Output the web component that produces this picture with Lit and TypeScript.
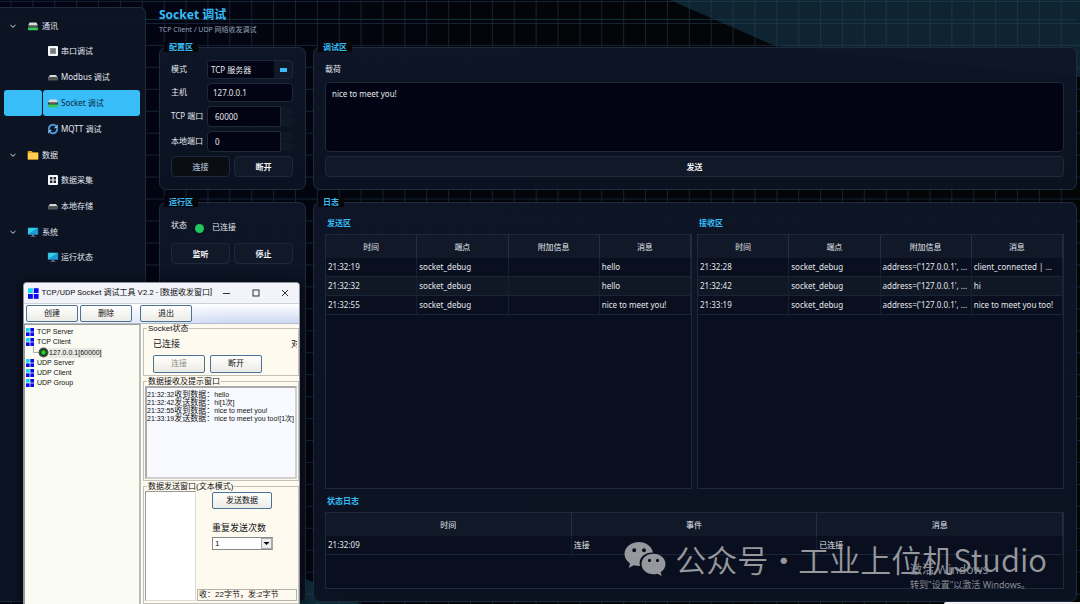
import { LitElement, html, svg, css, nothing } from "lit";
import { customElement, property } from "lit/decorators.js";

const icons: Record<string, unknown> = {
  modemOn: svg`<path d="M2.5 2.5h7l1.5 3.5H1z" fill="#d9dcd8"/><rect x="1" y="5.4" width="10" height="2.4" fill="#2b332f"/><rect x="1" y="7.6" width="10" height="2.6" rx=".6" fill="#35c759"/><rect x="2" y="6" width="8" height=".8" fill="#5d6761"/>`,
  modem: svg`<path d="M3 4h6l2 3H1z" fill="#d6d8d6"/><path d="M1 6.6h10v1.8a1 1 0 0 1-1 1H2a1 1 0 0 1-1-1z" fill="#55585a"/><rect x="2" y="6.4" width="8" height=".8" fill="#2c2f31"/>`,
  chip: svg`<rect x="1" y="1" width="10" height="10" rx="1" fill="#f4f6f8"/><rect x="3" y="3" width="6" height="6" fill="#8f9498"/><rect x="4" y="4" width="4" height="4" fill="#777c80"/>`,
  sync: svg`<path d="M2 6.6A4 4 0 0 1 9 3.2M10 5.4A4 4 0 0 1 3 8.8" fill="none" stroke="#4a9fe0" stroke-width="1.9"/><path d="M10.8 1.2v4H6.8zM1.2 10.8v-4h4z" fill="#7cc0f2"/>`,
  folder: svg`<path d="M.8 2h4l1 1.2h5.4V10.4H.8z" fill="#e9a51f"/><path d="M.8 4h10.4v6.4H.8z" fill="#ffcf4d"/>`,
  grid: svg`<rect x="1" y="1" width="10" height="10" rx="1" fill="#f4f6f8"/><path d="M3 3h2.4v2.4H3zM6.6 3H9v2.4H6.6zM3 6.6h2.4V9H3zM6.6 6.6H9V9H6.6z" fill="#20262c"/>`,
  screen: svg`<rect x=".8" y="1.6" width="10.4" height="7.2" rx=".5" fill="#1273c4"/><path d="M1.2 2h9.6L1.2 8.4z" fill="#35cfe0"/><path d="M1.2 8.4L10.8 2v6.4z" fill="#1d9bd6"/><path d="M5 8.8h2v1.2H5zM3.6 10h4.8v.8H3.6z" fill="#6b7a86"/>`,
};
const icon = (name: string) => html`<svg class="icon" viewBox="0 0 12 12" aria-hidden="true">${icons[name]}</svg>`;

const tiles = html`<svg class="tiles" viewBox="0 0 11 11" aria-hidden="true">
  <rect width="5" height="5" fill="#12dcea"></rect><rect x="6" width="5" height="5" fill="#0a0af0"></rect>
  <rect y="6" width="5" height="5" fill="#0a0af0"></rect><rect x="6" y="6" width="5" height="5" fill="#0a0af0"></rect></svg>`;

interface NavItem { label: string; icon: string; active?: boolean }
const nav: { label: string; icon: string; items: NavItem[] }[] = [
  { label: "通讯", icon: "modemOn", items: [
    { label: "串口调试", icon: "chip" },
    { label: "Modbus 调试", icon: "modem" },
    { label: "Socket 调试", icon: "modemOn", active: true },
    { label: "MQTT 调试", icon: "sync" },
  ] },
  { label: "数据", icon: "folder", items: [
    { label: "数据采集", icon: "grid" },
    { label: "本地存储", icon: "modem" },
  ] },
  { label: "系统", icon: "screen", items: [{ label: "运行状态", icon: "screen" }] },
];

const logColumns = ["时间", "端点", "附加信息", "消息"];
const sent = [
  ["21:32:19", "socket_debug", "", "hello"],
  ["21:32:32", "socket_debug", "", "hello"],
  ["21:32:55", "socket_debug", "", "nice to meet you!"],
];
const received = [
  ["21:32:28", "socket_debug", "address=('127.0.0.1', ...", "client_connected | ..."],
  ["21:32:42", "socket_debug", "address=('127.0.0.1', ...", "hi"],
  ["21:33:19", "socket_debug", "address=('127.0.0.1', ...", "nice to meet you too!"],
];

@customElement("log-table")
export class LogTable extends LitElement {
  @property() label = "";
  @property({ attribute: false }) columns: string[] = [];
  @property({ attribute: false }) rows: string[][] = [];

  static styles = css`
    :host { display: flex; flex-direction: column; gap: 4px; min-width: 0; }
    .label { margin: 0; padding-left: 2px; font-size: 8px; line-height: 15px; color: #38bdf8; }
    .frame { flex: 1; border: 1px solid #1e293b; background: #090f1e; overflow: hidden; }
    table { width: 100%; table-layout: fixed; border-collapse: separate; border-spacing: 0; font-size: 8px; }
    th { height: 23px; padding: 0; font-weight: 400; color: #e2e8f0; background: #111827; border-right: 1px solid #243040; }
    td { height: 18px; padding: 0 2px; line-height: 12px; white-space: nowrap; overflow: hidden; color: #e5e7eb;
      border-right: 1px solid #172030; border-bottom: 1px solid #1a2535; }
    tr:nth-child(even) td { background: #101826; }
  `;

  render() {
    return html`
      <h3 class="label">${this.label}</h3>
      <div class="frame">
        <table aria-label=${this.label}>
          <thead><tr>${this.columns.map((c) => html`<th scope="col">${c}</th>`)}</tr></thead>
          <tbody>${this.rows.map((r) => html`<tr>${r.map((c) => html`<td>${c}</td>`)}</tr>`)}</tbody>
        </table>
      </div>`;
  }
}

@customElement("socket-tool")
export class SocketTool extends LitElement {
  static styles = css`
    * { box-sizing: border-box; }
    :host { display: flex; flex-direction: column; overflow: hidden; color: #111; background: #fffaf0;
      border: 1px solid #8b929c; border-bottom: 0; border-radius: 4px 4px 0 0; box-shadow: 0 2px 10px 4px rgba(0, 0, 0, 0.45);
      font-family: "Liberation Sans", "Noto Sans CJK SC", sans-serif; font-size: 8px; line-height: 10px; }
    .title { display: flex; align-items: center; height: 20px; padding-left: 4px; background: #f2f4fa;
      font-family: Roboto, "Noto Sans CJK SC", sans-serif; white-space: nowrap; flex: none; }
    .title .tiles { width: 11px; height: 11px; margin-right: 3px; }
    .caption { flex: 1; }
    .win { width: 30px; height: 20px; padding: 0; border: 0; background: none; display: grid; place-items: center; }
    .win svg { width: 8px; height: 8px; fill: none; stroke: #333; }
    .bar { display: flex; gap: 2px; height: 21px; padding: 1px 2px; flex: none; border-top: 1px solid #ccd2dd;
      border-bottom: 1px solid #b4bbc8; background: linear-gradient(90deg, #fff, rgba(255, 255, 255, 0) 75%), linear-gradient(#fff, #ccd8f3); }
    .push { width: 52px; height: 18px; padding: 0; border: 1px solid #4a7398; border-radius: 2px; color: #111;
      background: linear-gradient(#fff, #ecebe5); font: inherit; font-size: 8px; }
    .bar .push { height: 17px; }
    .bar .push:last-child { margin-left: 6px; }
    .push:disabled { color: #8f8f8b; }
    .body { flex: 1; display: grid; grid-template-columns: 117px 1fr; min-height: 0; }
    .tree { margin: 0; padding: 2px 0 0 1px; list-style: none; background: #fafbf2; border: 1px solid #9a9a96;
      border-right: 2px solid #bcbcb8; border-bottom: 0; font-size: 7px; }
    .tree ul { margin: 0; padding: 0 0 0 6px; list-style: none; }
    .node { display: flex; align-items: center; gap: 3px; height: 10px; }
    .tree .tiles { width: 8px; height: 8px; }
    .leaf { display: flex; align-items: center; gap: 0; height: 11px; }
    .leaf svg { width: 17px; height: 11px; }
    .leaf span { background: #e9e9e4; }
    .side { display: flex; flex-direction: column; gap: 1px; min-width: 0; padding-left: 2px; }
    fieldset { margin: 0; min-width: 0; padding: 0 1px 2px; border: 1px solid #c4c1b8; }
    legend { margin-left: 2px; padding: 0 1px; line-height: 9px; height: 9px; }
    .state { height: 52px; }
    .line { display: flex; justify-content: space-between; align-items: center; height: 22px; padding-left: 8px; white-space: nowrap;
      font-size: 9px; }
    .cut { width: 6px; overflow: hidden; }
    .pair { display: flex; gap: 5px; padding-left: 8px; }
    .received { height: 104px; }
    .output { height: 93px; margin: 0; padding: 3px 0; background: #f8faff; border: 2px solid #aaa; border-right-color: #d0d0d0;
      border-bottom-color: #d0d0d0; font-size: 7px; line-height: 8px; white-space: nowrap; overflow: hidden; }
    .output p { margin: 0; height: 8px; line-height: 8px; display: flex; align-items: center; }
    .tag { font-size: 8px; }
    .send { flex: 1; }
    .cols { display: grid; grid-template-columns: 51px 1fr; height: 110px; }
    textarea { resize: none; width: 100%; height: 100%; padding: 0; border: 1px solid #999; border-right-color: #ddd;
      border-bottom-color: #ddd; background: #fff; }
    .options { display: flex; flex-direction: column; align-items: flex-start; padding: 1px 0 0 1px; }
    .options .push { width: 60px; margin-left: 15px; height: 17px; flex: none; }
    .options label { margin: 14px 0 4px 15px; font-size: 9px; }
    .choice { position: relative; margin-left: 15px; width: 61px; height: 13px; flex: none; }
    select { appearance: none; width: 100%; height: 100%; padding: 0 2px; border: 1px solid #888; border-right-color: #aaa; border-radius: 0;
      background: #fff; color: #111; font: inherit; }
    .drop { position: absolute; right: 1px; top: 1px; width: 11px; height: 11px; background: #ededed; border: 1px solid #aaa;
      pointer-events: none; }
    .count { margin-top: auto; width: 100%; height: 12px; border: 1px solid #b5b2aa; padding-left: 1px; white-space: nowrap; }
  `;

  private log = [
    ["21:32:32", "收到数据：", "hello"],
    ["21:32:42", "发送数据：", "hi[1次]"],
    ["21:32:55", "收到数据：", "nice to meet you!"],
    ["21:33:19", "发送数据：", "nice to meet you too![1次]"],
  ];

  private node(label: string, child: unknown = nothing) {
    return html`<li><div class="node">${tiles}${label}</div>${child}</li>`;
  }

  render() {
    return html`
      <div class="title">
        ${tiles}<span class="caption">TCP/UDP Socket 调试工具 V2.2 - [数据收发窗口]</span>
        <button class="win" aria-label="最小化"><svg viewBox="0 0 8 8"><path d="M0 4.5h7"/></svg></button>
        <button class="win" aria-label="最大化"><svg viewBox="0 0 8 8"><rect x="1" y="1" width="6" height="6"/></svg></button>
        <button class="win" aria-label="关闭"><svg viewBox="0 0 8 8"><path d="M1 1l6 6M7 1L1 7"/></svg></button>
      </div>
      <div class="bar">
        <button class="push">创建</button><button class="push">删除</button><button class="push">退出</button>
      </div>
      <div class="body">
        <ul class="tree">
          ${this.node("TCP Server")}
          ${this.node("TCP Client", html`<ul><li class="leaf">
            <svg viewBox="0 0 17 11" aria-hidden="true"><path d="M1.500 0v5.500h5" fill="none" stroke="#aaa"></path>
              <circle cx="11.500" cy="5.500" r="5" fill="#4a514a"></circle><circle cx="11.500" cy="5.500" r="3.400" fill="#123c14"></circle>
              <circle cx="11.500" cy="5.500" r="2.200" fill="#25d22c"></circle></svg>
            <span>127.0.0.1[60000]</span></li></ul>`)}
          ${this.node("UDP Server")}${this.node("UDP Client")}${this.node("UDP Group")}
        </ul>
        <div class="side">
          <fieldset class="state">
            <legend>Socket状态</legend>
            <div class="line"><span>已连接</span><span class="cut">对</span></div>
            <div class="pair"><button class="push" disabled>连接</button><button class="push">断开</button></div>
          </fieldset>
          <fieldset class="received">
            <legend>数据接收及提示窗口</legend>
            <div class="output">${this.log.map(([time, tag, text]) =>
              html`<p><span>${time}</span><span class="tag">${tag}</span><span>${text}</span></p>`)}</div>
          </fieldset>
          <fieldset class="send">
            <legend>数据发送窗口(文本模式)</legend>
            <div class="cols">
              <textarea aria-label="发送内容"></textarea>
              <div class="options">
                <button class="push">发送数据</button>
                <label for="times">重复发送次数</label>
                <div class="choice">
                  <select id="times"><option>1</option></select>
                  <svg class="drop" viewBox="0 0 9 9" aria-hidden="true"><path d="M1.500 3h6L4.500 6z" fill="#000"></path></svg>
                </div>
                <div class="count">收：22字节，发:2字节</div>
              </div>
            </div>
          </fieldset>
        </div>
      </div>`;
  }
}

@customElement("app-root")
export class AppRoot extends LitElement {
  static styles = css`
    * { box-sizing: border-box; }
    :host { display: block; position: relative; height: 100vh; overflow: hidden; background: #030408; color: #e2e8f0;
      font-family: "Noto Sans", "Noto Sans CJK SC", sans-serif; font-size: 8px; line-height: 12px; }
    .backdrop { position: absolute; inset: 0; width: 100%; height: 100%; }
    .page { position: relative; display: grid; grid-template-columns: 146px 1fr; column-gap: 13px; height: 100%; padding: 7px 3px 2px 0; }
    nav { border: 1px solid #1e2b3f; border-left: 0; border-radius: 0 6px 6px 0; padding: 5px 5px 0 4px;
      background: rgba(13, 20, 36, 0.95); }
    nav ul { margin: 0; padding: 0; list-style: none; }
    .icon { width: 12px; height: 12px; flex: none; }
    .group, .item { display: flex; align-items: center; width: 100%; padding: 0; border: 0; background: none;
      color: #e2e8f0; font: inherit; text-decoration: none; }
    .group { height: 25px; padding-left: 5px; }
    .group .icon { margin: 0 3px 0 10px; }
    .chev { width: 8px; height: 8px; fill: none; stroke: #d5dbe4; }
    .item { height: 26px; display: grid; grid-template-columns: 38px 1fr; column-gap: 1px; }
    .item span { display: flex; align-items: center; gap: 2px; height: 26px; padding-left: 4px; border-radius: 3px; }
    .item i { height: 26px; border-radius: 3px; }
    .active span, .active i { background: #38bdf8; }
    .active { color: #0b2a40; }

    main { display: flex; flex-direction: column; min-width: 0; }
    h1 { margin: 0; font-size: 12px; line-height: 16px; color: #38bdf8; }
    .sub { margin: 0; font-size: 7px; line-height: 14px; color: #94a3b8; }
    .panels { flex: 1; display: grid; grid-template-columns: 147px 1fr; grid-template-rows: auto 1fr; gap: 7px; padding-top: 5px; min-height: 0; }
    fieldset { display: flex; flex-direction: column; gap: 4px; min-width: 0; margin: 0; padding: 8px 12px 12px 11px;
      border: 1px solid #1e2b3f; border-radius: 7px; background: linear-gradient(rgba(14, 22, 39, 0.95), rgba(11, 18, 33, 0.95)); }
    legend { margin-left: -7px; padding: 0 5px; height: 10px; line-height: 10px; background: #04060a; color: #38bdf8; font-weight: 700; }
    input, select, textarea { font: inherit; color: #e5e7eb; background: #020414; border: 1px solid #1e293b; border-radius: 4px; }
    .row { display: grid; grid-template-columns: 36px 1fr; align-items: center; white-space: nowrap; }
    .row label { padding-bottom: 1px; }
    .row input { width: 100%; min-width: 0; height: 19px; padding: 0 5px; }
    .pick { display: grid; grid-template-columns: 1fr 18px; height: 19px; border: 1px solid #1e293b; border-radius: 4px; overflow: hidden; background: #111827; }
    .pick select { appearance: none; width: 100%; height: 17px; padding: 0 3px; border: 0; border-radius: 0; }
    .mark { place-self: center; width: 7px; height: 4px; background: #38bdf8; }
    .spin { display: grid; grid-template-columns: 74px 1fr; height: 21px; }
    .spin input { height: 21px; padding: 0 7px; border-radius: 4px 0 0 4px; }
    .steps { display: grid; grid-template-rows: 1fr 1fr; gap: 1px; padding: 1px 0; }
    .steps button { padding: 0; border: 0; background: #101725; border-radius: 0 3px 3px 0; }
    .btn { height: 21px; padding: 0; border: 1px solid #1e293b; border-radius: 4px; background: #111827; color: #f1f5f9; font: inherit; font-weight: 700; }
    .btn:disabled { background: #0a0d12; color: #94a3b8; }
    .two { display: grid; grid-template-columns: 1fr 1fr; gap: 4px; }
    .status { display: flex; align-items: center; height: 24px; }
    .status .name { padding-bottom: 4px; }
    .dot { width: 9px; height: 9px; margin: 3px 8px 0; border-radius: 50%; background: #22c55e; }
    .debug label { line-height: 18px; }
    .debug textarea { flex: 1; resize: none; padding: 5px 6px; min-height: 0; line-height: 12px; }
    .logs { flex: 1; display: grid; grid-template-columns: 1fr 1fr; gap: 5px; min-height: 0; }
    .events { height: 96px; flex: none; }

    socket-tool { position: absolute; left: 23px; top: 282px; bottom: 0; width: 277px; }
    .brand { position: absolute; right: 33px; bottom: 25px; display: flex; align-items: center; color: #a2a4a9; opacity: 0.92;
      font: 350 31px/40px "Noto Sans CJK SC", sans-serif; white-space: nowrap; pointer-events: none; }
    .brand svg { width: 42px; height: 36px; margin-right: 9px; }
    .brand span { width: 30px; text-align: center; }
    .activate { position: absolute; right: 42px; bottom: 12px; width: 128px; color: #8a8e96; pointer-events: none; white-space: nowrap; }
    .activate p { margin: 0; }
    .big { font-size: 12px; line-height: 17px; }
    .small { font-size: 9px; line-height: 14px; }
    .toast { position: absolute; right: 0; bottom: 0; width: 136px; height: 2px; background: #f3f3f3; border-radius: 2px 0 0 0; }
  `;

  private button(text: string, disabled = false) {
    return html`<button class="btn" ?disabled=${disabled}>${text}</button>`;
  }

  private spin(id: string, label: string, value: string) {
    return html`<div class="row"><label for=${id}>${label}</label>
      <div class="spin"><input id=${id} .value=${value} inputmode="numeric">
        <div class="steps"><button aria-label="增加"></button><button aria-label="减少"></button></div></div></div>`;
  }

  render() {
    return html`
      <svg class="backdrop" viewBox="0 0 1080 604" preserveAspectRatio="none" aria-hidden="true">
        <defs>
          <linearGradient id="base"><stop offset="0" stop-color="#020414"></stop><stop offset=".55" stop-color="#040508"></stop><stop offset="1" stop-color="#040507"></stop></linearGradient>
          <pattern id="lines" x="10.500" y="1" width="21.880" height="21.950" patternUnits="userSpaceOnUse">
            <path d="M.5 0V22M0 .5H22" stroke="#27425f" stroke-opacity=".48" fill="none"></path></pattern>
        </defs>
        <rect width="1080" height="604" fill="url(#base)"></rect>
        <path d="M670 0H1080V77L775 46z" fill="#0e2430"></path>
        <path d="M240 549L361 604H240z" fill="#0c2a38"></path>
        <rect width="1080" height="604" fill="url(#lines)"></rect>
        <path d="M0 19.500H1077" stroke="#12404f" stroke-opacity=".7"></path>
      </svg>
      <div class="page">
        <nav aria-label="导航">
          ${nav.map((g) => html`
            <button class="group" aria-expanded="true">
              <svg class="chev" viewBox="0 0 8 8" aria-hidden="true"><path d="M1.500 3L4 5.300 6.500 3"/></svg>${icon(g.icon)}${g.label}
            </button>
            <ul>${g.items.map((n) => html`<li><a class="item ${n.active ? "active" : ""}" href="#"><i></i><span>${icon(n.icon)}${n.label}</span></a></li>`)}</ul>`)}
        </nav>
        <main>
          <h1>Socket 调试</h1>
          <p class="sub">TCP Client / UDP 网络收发调试</p>
          <div class="panels">
            <fieldset>
              <legend>配置区</legend>
              <div class="row"><label for="mode">模式</label>
                <div class="pick"><select id="mode"><option>TCP 服务器</option></select><div class="mark"></div></div></div>
              <div class="row"><label for="host">主机</label><input id="host" .value=${"127.0.0.1"}></div>
              ${this.spin("port", "TCP 端口", "60000")}
              ${this.spin("local", "本地端口", "0")}
              <div class="two">${this.button("连接", true)}${this.button("断开")}</div>
            </fieldset>
            <fieldset class="debug">
              <legend>调试区</legend>
              <label for="payload">载荷</label>
              <textarea id="payload" .value=${"nice to meet you!"}></textarea>
              ${this.button("发送")}
            </fieldset>
            <fieldset>
              <legend>运行区</legend>
              <div class="status"><span class="name">状态</span><span class="dot"></span><span>已连接</span></div>
              <div class="two">${this.button("监听")}${this.button("停止")}</div>
            </fieldset>
            <fieldset>
              <legend>日志</legend>
              <div class="logs">
                <log-table label="发送区" .columns=${logColumns} .rows=${sent}></log-table>
                <log-table label="接收区" .columns=${logColumns} .rows=${received}></log-table>
              </div>
              <log-table class="events" label="状态日志" .columns=${["时间", "事件", "消息"]} .rows=${[["21:32:09", "连接", "已连接"]]}></log-table>
            </fieldset>
          </div>
        </main>
      </div>
      <socket-tool></socket-tool>
      <div class="brand">
        <svg viewBox="0 0 42 36" aria-hidden="true">
          <path fill="currentColor" fill-rule="evenodd" d="M15 1C7 1 .5 6.300.5 13c0 3.900 2.200 7.200 5.500 9.400L4.800 27l5-2.700c1.700.5 3.400.7 5.200.7h1C14 17.500 20 11.300 29 11.500 27.700 5.500 22 1 15 1zM10.200 7.200a2 2 0 1 1 0 4 2 2 0 0 1 0-4zm9.800 0a2 2 0 1 1 0 4 2 2 0 0 1 0-4z"></path>
          <path fill="currentColor" fill-rule="evenodd" d="M29.500 12.800c-6.800 0-12 4.600-12 10.200s5.200 10.300 12 10.300c1.400 0 2.800-.2 4-.6l4.200 2.300-1.100-3.800c3-1.900 4.900-4.800 4.900-8.200 0-5.600-5.300-10.200-12-10.200zm-4 5a1.600 1.600 0 1 1 0 3.200 1.600 1.600 0 0 1 0-3.200zm8 0a1.600 1.600 0 1 1 0 3.200 1.600 1.600 0 0 1 0-3.200z"></path>
        </svg>公众号<span>·</span>工业上位机Studio
      </div>
      <div class="activate"><p class="big">激活 Windows</p><p class="small">转到"设置"以激活 Windows。</p></div>
      <div class="toast"></div>`;
  }
}
